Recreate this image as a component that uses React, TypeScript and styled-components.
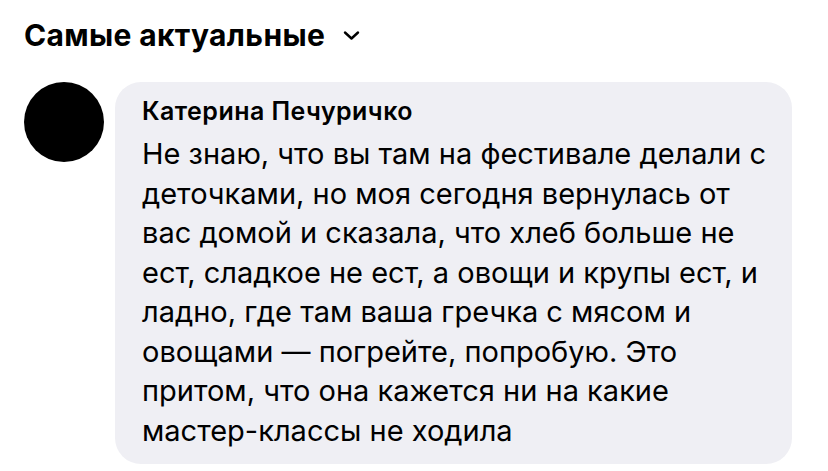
import React from 'react';
import styled, { createGlobalStyle } from 'styled-components';

const GlobalStyle = createGlobalStyle`
  html, body {
    margin: 0;
    padding: 0;
    background: #ffffff;
  }
  body {
    font-family: Inter, "Noto Sans", "Liberation Sans", sans-serif;
    color: #000000;
  }
`;

const Page = styled.div`
  width: 828px;
  height: 471px;
  overflow: hidden;
  padding: 17px 0 0 24px;
  box-sizing: border-box;
`;

const SortButton = styled.div`
  display: flex;
  align-items: center;
  gap: 18px;
  font-size: 30px;
  font-weight: 700;
  letter-spacing: 0.35px;
  line-height: 36px;
`;

const CommentRow = styled.div`
  display: flex;
  align-items: flex-start;
  gap: 11px;
  margin-top: 29px;
`;

const Avatar = styled.div`
  width: 80px;
  height: 80px;
  border-radius: 50%;
  background: #000000;
  flex-shrink: 0;
`;

const Bubble = styled.div`
  width: 677px;
  box-sizing: border-box;
  background: #efeff4;
  border-radius: 26px;
  padding: 14px 20px 14px 27px;
`;

const Author = styled.div`
  font-size: 25px;
  font-weight: 600;
  line-height: 30px;
  letter-spacing: 0.45px;
`;

const Text = styled.div`
  font-size: 29px;
  font-weight: 400;
  line-height: 39.5px;
  margin-top: 8px;
  white-space: nowrap;
`;

const Chevron = () => (
  <svg width="17" height="11" viewBox="0 0 17 11" fill="none">
    <path d="M2 2.5l6.5 6 6.5-6" stroke="#000" strokeWidth="2.4" strokeLinecap="round" strokeLinejoin="round" />
  </svg>
);

const lines = [
  'Не знаю, что вы там на фестивале делали с',
  'деточками, но моя сегодня вернулась от',
  'вас домой и сказала, что хлеб больше не',
  'ест, сладкое не ест, а овощи и крупы ест, и',
  'ладно, где там ваша гречка с мясом и',
  'овощами — погрейте, попробую. Это',
  'притом, что она кажется ни на какие',
  'мастер-классы не ходила',
];

const App: React.FC = () => {
  return (
    <>
      <GlobalStyle />
      <Page>
        <SortButton>
          Самые актуальные
          <Chevron />
        </SortButton>
        <CommentRow>
          <Avatar />
          <Bubble>
            <Author>Катерина Печуричко</Author>
            <Text>
              {lines.map((line, i) => (
                <div key={i}>{line}</div>
              ))}
            </Text>
          </Bubble>
        </CommentRow>
      </Page>
    </>
  );
};

export default App;
